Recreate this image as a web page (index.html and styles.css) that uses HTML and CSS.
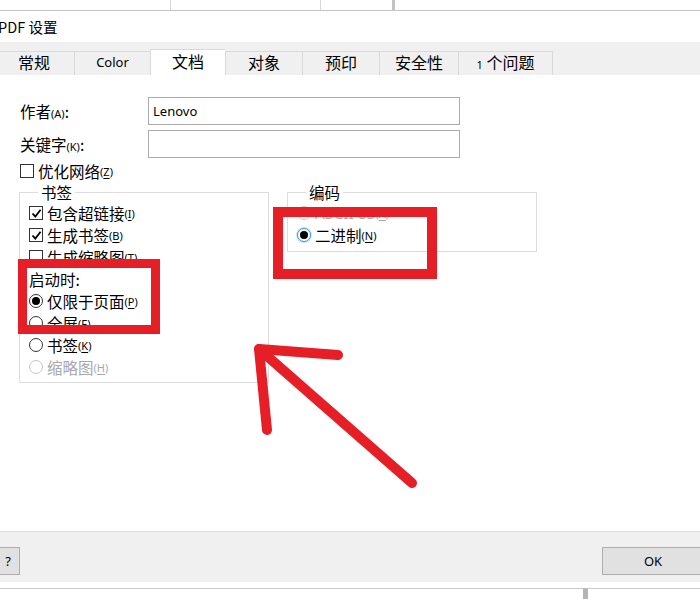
FILE: index.html
```
<!DOCTYPE html>
<html>
<head lang="zh">
    <meta charset="UTF-8">
    <title>PDF 设置</title>
    <link rel="stylesheet" href="styles.css">
</head>
<body>
<div id="page">
    <div class="backdrop">
        <div class="cell c1"></div>
        <div class="cell c2"></div>
        <div class="cell c3"></div>
        <div class="cell c4"></div>
    </div>
    <div class="titlebar">PDF 设置</div>
    <ul class="tabs">
        <li class="t1">常规</li>
        <li class="t2 latin">Color</li>
        <li class="t3 select">文档</li>
        <li class="t4">对象</li>
        <li class="t5">预印</li>
        <li class="t6">安全性</li>
        <li class="t7"><span class="num">1</span> 个问题</li>
    </ul>
    <div class="panel">
        <div class="field">
            <label>作者<span class="acc">(A)</span>:</label>
            <div class="input">Lenovo</div>
        </div>
        <div class="field">
            <label>关键字<span class="acc">(K)</span>:</label>
            <div class="input"></div>
        </div>
        <div class="item">
            <span class="box"></span>优化网络<span class="acc">(<u>Z</u>)</span>
        </div>
        <div class="groups">
            <fieldset class="group g1">
                <legend>书签</legend>
                <div class="item">
                    <span class="box"><svg width="11" height="11" viewBox="0 0 11 11"><path d="M1.5 5.5 L4.3 8.6 L9.6 1.8" fill="none" stroke="#000" stroke-width="1.8"/></svg></span>包含超链接<span class="acc">(<u>I</u>)</span>
                </div>
                <div class="item">
                    <span class="box"><svg width="11" height="11" viewBox="0 0 11 11"><path d="M1.5 5.5 L4.3 8.6 L9.6 1.8" fill="none" stroke="#000" stroke-width="1.8"/></svg></span>生成书签<span class="acc">(<u>B</u>)</span>
                </div>
                <div class="item">
                    <span class="box"></span>生成缩略图<span class="acc">(<u>T</u>)</span>
                </div>
                <div class="item plain">启动时:</div>
                <div class="item">
                    <span class="radio on"></span>仅限于页面<span class="acc">(<u>P</u>)</span>
                </div>
                <div class="item">
                    <span class="radio"></span>全屏<span class="acc">(<u>F</u>)</span>
                </div>
                <div class="item">
                    <span class="radio"></span>书签<span class="acc">(<u>K</u>)</span>
                </div>
                <div class="item off">
                    <span class="radio"></span>缩略图<span class="acc">(<u>H</u>)</span>
                </div>
            </fieldset>
            <fieldset class="group g2">
                <legend>编码</legend>
                <div class="item off">
                    <span class="radio"></span><span class="latin">ASCII 85</span><span class="acc">(<u>A</u>)</span>
                </div>
                <div class="item">
                    <span class="radio on focus"></span>二进制<span class="acc">(<u>N</u>)</span>
                </div>
            </fieldset>
        </div>
    </div>
    <div class="footer">
        <div class="btn help">?</div>
        <div class="btn ok">OK</div>
    </div>
    <div class="under">
        <div class="ucell"></div>
        <div class="ubar"></div>
    </div>

    <!-- 标注 -->
    <div class="mark m1"></div>
    <div class="mark m2"></div>
    <svg class="arrow" width="700" height="599" viewBox="0 0 700 599">
        <g fill="none" stroke="#e61f26" stroke-width="10" stroke-linecap="round" stroke-linejoin="round">
            <path d="M412 483 L259 349"/>
            <path d="M338 355 L259 349 L267 430"/>
        </g>
    </svg>
</div>
</body>
</html>
```

FILE: styles.css
```
* {
    margin: 0;
    padding: 0;
    box-sizing: border-box;
}
ul {
    list-style: none;
}
body {
    font-family: "Noto Sans CJK SC", sans-serif;
    color: #000;
    background: #fff;
}
.latin {
    font-family: "Noto Sans", "Noto Sans CJK SC", sans-serif;
}
#page {
    width: 700px;
    height: 599px;
    position: relative;
    overflow: hidden;
    background: #fff;
}
.backdrop {
    display: flex;
    height: 11px;
    border-bottom: 1px solid #c4c4c4;
}
.backdrop .cell {
    border-right: 1px solid #d6d6d6;
}
.backdrop .c1 { width: 171px; }
.backdrop .c2 { width: 150px; }
.backdrop .c3 { width: 74px; border-right: 3px solid #c2c2c2; }
.backdrop .c4 { flex: 1; border-right: none; }
.titlebar {
    height: 31px;
    line-height: 31px;
    font-size: 14.5px;
    text-indent: -2px;
    white-space: nowrap;
}
.tabs {
    display: flex;
    align-items: flex-end;
    height: 33px;
    background: #f0f0f0;
    margin-left: -1px;
}
.tabs li {
    height: 24px;
    line-height: 21px;
    text-align: center;
    font-size: 16px;
    background: #f0f0f0;
    border: 1px solid #d9d9d9;
    border-right: none;
    border-bottom: none;
}
.tabs li.latin {
    font-size: 13px;
}
.tabs li.select {
    height: 26px;
    line-height: 23px;
    background: #fff;
}
.tabs .t1 { width: 75px; text-indent: -6px; }
.tabs .t2 { width: 76px; }
.tabs .t3 { width: 75px; }
.tabs .t4 { width: 77px; }
.tabs .t5 { width: 77px; }
.tabs .t6 { width: 79px; }
.tabs .t7 { width: 95px; border-right: 1px solid #d9d9d9; }
.tabs .num {
    font-family: "Noto Sans", sans-serif;
    font-size: 11px;
}
.panel {
    height: 456px;
    padding: 22px 0 0 20px;
    background: #fff;
}
.field {
    display: flex;
    align-items: center;
    height: 28px;
    margin-bottom: 5px;
    font-size: 15.5px;
}
.field label {
    width: 128px;
}
.input {
    width: 312px;
    height: 28px;
    border: 1px solid #ababab;
    padding-left: 4px;
    line-height: 26px;
    font-family: "Noto Sans", sans-serif;
    font-size: 13px;
}
.acc {
    font-family: "Noto Sans", sans-serif;
    font-size: 11px;
}
.acc u {
    text-underline-offset: 2px;
}
.item {
    display: flex;
    align-items: center;
    height: 22px;
    font-size: 15.5px;
    white-space: nowrap;
}
.panel > .item {
    margin-top: -3px;
}
.box {
    width: 14px;
    height: 14px;
    border: 1px solid #333;
    background: #fff;
    margin-right: 4px;
    display: flex;
    align-items: center;
    justify-content: center;
}
.radio {
    width: 14px;
    height: 14px;
    border: 1px solid #333;
    border-radius: 50%;
    background: #fff;
    margin-right: 4px;
    display: flex;
    align-items: center;
    justify-content: center;
}
.radio.on::after {
    content: "";
    width: 8px;
    height: 8px;
    border-radius: 50%;
    background: #000;
}
.radio.focus {
    border-color: #3b8fd6;
    box-shadow: 0 0 0 1px #cfe6f8;
}
.item.off {
    color: #a8a8a8;
}
.item.off .radio {
    border-color: #c4c4c4;
}
.groups {
    display: flex;
    align-items: flex-start;
    margin-left: -1px;
}
.group {
    border: 1px solid #dcdcdc;
    padding: 0 0 4px 9px;
    min-width: 0;
}
.group legend {
    font-size: 15.5px;
    line-height: 20px;
    padding: 0 3px;
    margin-left: 9px;
}
.g1 {
    width: 250px;
}
.g2 {
    width: 250px;
    margin-left: 18px;
    padding-bottom: 5px;
}
.footer {
    display: flex;
    justify-content: space-between;
    height: 51px;
    padding-top: 15px;
    background: #f0f0f0;
    border-top: 1px solid #dedede;
}
.btn {
    height: 28px;
    line-height: 26px;
    text-align: center;
    font-family: "Noto Sans", sans-serif;
    font-size: 13px;
    background: #e1e1e1;
    border: 1px solid #adadad;
}
.help {
    width: 40px;
    margin-left: -20px;
    padding-left: 16px;
}
.ok {
    width: 110px;
    margin-right: -12px;
    padding-right: 8px;
}
.under {
    display: flex;
    height: 18px;
    padding-top: 6px;
}
.ucell {
    width: 583px;
    border-top: 1px solid #c8c8c8;
}
.ubar {
    flex: 1;
    border-top: 1px solid #c8c8c8;
    border-left: 5px solid #b4b4b4;
}
.mark {
    position: absolute;
    border-style: solid;
    border-color: #e61f26;
}
.m1 {
    left: 18px;
    top: 259px;
    width: 142px;
    height: 75px;
    border-width: 9px;
}
.m2 {
    left: 273px;
    top: 207px;
    width: 164px;
    height: 72px;
    border-width: 10px;
}
.arrow {
    position: absolute;
    left: 0;
    top: 0;
}
```
